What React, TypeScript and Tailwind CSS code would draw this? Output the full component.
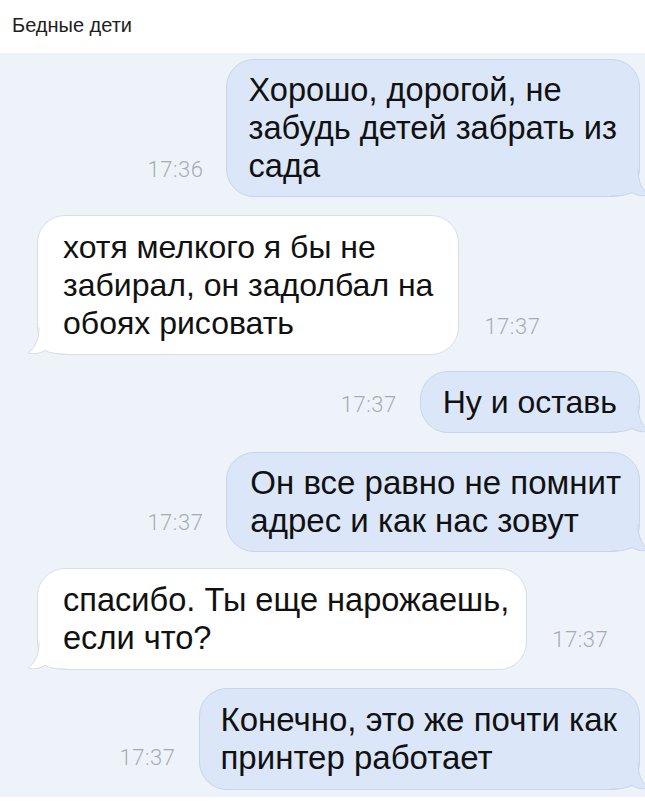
import React from "react";

const font = { fontFamily: '"Liberation Sans", Arial, sans-serif' };
const tfont = { fontFamily: 'Roboto, "Liberation Sans", Arial, sans-serif' };

function Tail({ side, fill, stroke }: { side: "left" | "right"; fill: string; stroke: string }) {
  return (
    <svg
      width="40"
      height="42"
      viewBox="0 0 40 42"
      className={
        side === "right"
          ? "absolute right-[-12px] bottom-[-1px] overflow-visible"
          : "absolute left-[-12px] bottom-[-1px] overflow-visible -scale-x-100"
      }
    >
      <path
        d="M0 41 L0 0 L27 0 L27 14 C27 27 31 35 38 40 C32 41.5 26 40.5 21 37.5 C15 40.5 8 41 0 41 Z"
        fill={fill}
      />
      <path
        d="M27 14 C27 27 31 35 38 40 C32 41.5 26 40.5 21 37.5 C15 40.5 8 41 0 41"
        fill="none"
        stroke={stroke}
        strokeWidth="1"
      />
    </svg>
  );
}

function Time({ t, cls }: { t: string; cls: string }) {
  return (
    <div className={"text-[22px] leading-[22px] font-light tracking-[0.5px] text-[#a6abb2] shrink-0 " + cls} style={tfont}>
      {t}
    </div>
  );
}

type P = { lines: string[]; time: string; mt: string; pl: string; pr: string; ts: string; size: string; py: string };

function Out({ lines, time, mt, pl, pr, ts, size, py }: P) {
  return (
    <div className={"flex justify-end items-end pr-[5px] gap-[23px] " + mt}>
      <Time t={time} cls={ts} />
      <div
        className={
          "relative rounded-[28px] bg-[#dbe7f8] border border-[#c6d5ea] leading-[38px] text-[#111] whitespace-nowrap " +
          [pl, pr, size, py].join(" ")
        }
        style={font}
      >
        <Tail side="right" fill="#dbe7f8" stroke="#c6d5ea" />
        <div className="relative">
          {lines.map((l, i) => (
            <div key={i}>{l}</div>
          ))}
        </div>
      </div>
    </div>
  );
}

function In({ lines, time, mt, pl, pr, ts, size, py }: P) {
  return (
    <div className={"flex justify-start items-end pl-[37px] gap-[25px] " + mt}>
      <div
        className={
          "relative rounded-[28px] bg-white border border-[#d8dee7] leading-[38px] text-[#111] whitespace-nowrap " +
          [pl, pr, size, py].join(" ")
        }
        style={font}
      >
        <Tail side="left" fill="#ffffff" stroke="#d8dee7" />
        <div className="relative">
          {lines.map((l, i) => (
            <div key={i}>{l}</div>
          ))}
        </div>
      </div>
      <Time t={time} cls={ts} />
    </div>
  );
}

export default function App() {
  return (
    <div className="w-[645px] h-[802px] overflow-hidden bg-white flex flex-col">
      <div className="h-[53px] shrink-0 flex items-center pl-[12px] pb-[4px] text-[20px] text-[#1e1e1e]" style={font}>
        Бедные дети
      </div>
      <div className="h-[744px] shrink-0 bg-[#eef3fa] flex flex-col pt-[6px]">
        <Out
          lines={["Хорошо, дорогой, не", "забудь детей забрать из", "сада"]}
          time="17:36"
          mt="mt-0"
          pl="pl-[21px]"
          pr="pr-[22px]"
          ts="mb-[16px]"
          size="text-[32.6px]"
          py="py-[11px]"
        />
        <In
          lines={["хотя мелкого я бы не", "забирал, он задолбал на", "обоях рисовать"]}
          time="17:37"
          mt="mt-[18px]"
          pl="pl-[25px]"
          pr="pr-[25px]"
          ts="mb-[17px]"
          size="text-[32px]"
          py="py-[12px]"
        />
        <Out
          lines={["Ну и оставь"]}
          time="17:37"
          mt="mt-[16px]"
          pl="pl-[22px]"
          pr="pr-[22px]"
          ts="mb-[17px]"
          size="text-[32px]"
          py="py-[11px]"
        />
        <Out
          lines={["Он все равно не помнит", "адрес и как нас зовут"]}
          time="17:37"
          mt="mt-[19px]"
          pl="pl-[23px]"
          pr="pr-[18px]"
          ts="mb-[18px]"
          size="text-[33px]"
          py="py-[11px]"
        />
        <In
          lines={["спасибо. Ты еще нарожаешь,", "если что?"]}
          time="17:37"
          mt="mt-[16px]"
          pl="pl-[25px]"
          pr="pr-[17px]"
          ts="mb-[19px]"
          size="text-[32.6px]"
          py="py-[12px]"
        />
        <Out
          lines={["Конечно, это же почти как", "принтер работает"]}
          time="17:37"
          mt="mt-[18px]"
          pl="pl-[21px]"
          pr="pr-[22px]"
          ts="mb-[21px]"
          size="text-[33px]"
          py="py-[12px]"
        />
      </div>
    </div>
  );
}
